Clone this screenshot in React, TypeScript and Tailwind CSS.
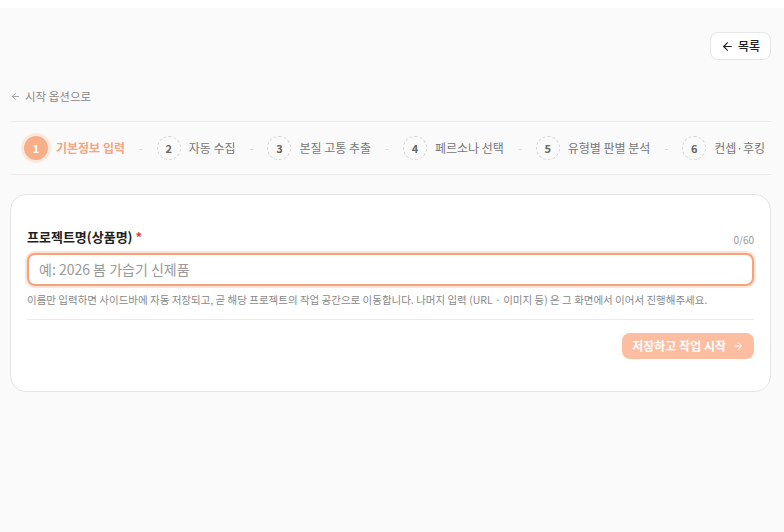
import { ArrowLeft, ArrowRight } from 'lucide-react';

const steps = ['기본정보 입력', '자동 수집', '본질 고통 추출', '페르소나 선택', '유형별 판별 분석', '컨셉·후킹'];

export default function App() {
  return (
    <div
      className="min-h-[532px] bg-[#fafafa] text-[#222]"
      style={{ fontFamily: '"Noto Sans CJK KR", "Noto Sans", "Liberation Sans", sans-serif' }}
    >
      <div className="h-[8px] bg-white" />
      <div className="pl-[10px] pr-[13px]">
        <div className="flex justify-end pt-[24px]">
          <button className="flex h-[28px] items-center gap-1 rounded-lg border border-[#e6e6e6] bg-white px-[10px] text-[12px] font-medium text-[#222]">
            <ArrowLeft size={13} strokeWidth={2} />
            목록
          </button>
        </div>

        <div className="mt-[28px] flex items-center gap-1 text-[11.5px] text-[#888]">
          <ArrowLeft size={11} strokeWidth={1.5} />
          시작 옵션으로
        </div>

        <div className="mt-[16px] flex h-[54px] items-center gap-[14px] overflow-hidden whitespace-nowrap border-y border-[#ececec] pl-[14px]">
          {steps.map((s, i) => (
            <div key={s} className="flex items-center gap-[14px]">
              {i > 0 && <span className="text-[11px] text-[#d4d4d4]">-</span>}
              <div className="flex items-center gap-[8px]">
                {i === 0 ? (
                  <span className="flex h-[24px] w-[24px] items-center justify-center rounded-full bg-[#f8ae88] text-[11px] font-bold text-white ring-[3px] ring-[#fde8dd]">
                    1
                  </span>
                ) : (
                  <span className="flex h-[24px] w-[24px] items-center justify-center rounded-full border border-dashed border-[#d6d6d6] text-[11px] font-bold text-[#666]">
                    {i + 1}
                  </span>
                )}
                <span className={i === 0 ? 'text-[12px] font-semibold text-[#f5a57f]' : 'text-[12px] text-[#777]'}>
                  {s}
                </span>
              </div>
            </div>
          ))}
        </div>

        <div className="mt-[19px] rounded-2xl border border-[#e4e4e4] bg-white px-[16px] pb-[32px] pt-[32px]">
          <div className="flex items-end justify-between">
            <label className="text-[13px] font-bold text-[#222]">
              프로젝트명(상품명) <span className="text-[#e53935]">*</span>
            </label>
            <span className="text-[10px] text-[#999]">0/60</span>
          </div>
          <input
            placeholder="예: 2026 봄 가습기 신제품"
            className="mt-[6px] h-[33px] w-full rounded-lg border-2 border-[#f5a27d] bg-white px-[10px] text-[14px] text-[#222] outline-none ring-2 ring-[#fde3d6] placeholder:text-[#9a9a9a]"
          />
          <p className="mt-[6px] text-[10.5px] leading-[15px] text-[#888]">
            이름만 입력하면 사이드바에 자동 저장되고, 곧 해당 프로젝트의 작업 공간으로 이동합니다. 나머지 입력 (URL · 이미지 등) 은 그 화면에서 이어서 진행해주세요.
          </p>
          <div className="mt-[12px] border-t border-[#ebebeb]" />
          <div className="mt-[13px] flex justify-end">
            <button className="flex h-[26px] items-center gap-[6px] rounded-lg bg-[#fdbda1] px-[10px] text-[12px] font-bold text-white">
              저장하고 작업 시작
              <ArrowRight size={12} strokeWidth={2} />
            </button>
          </div>
        </div>
      </div>
    </div>
  );
}
